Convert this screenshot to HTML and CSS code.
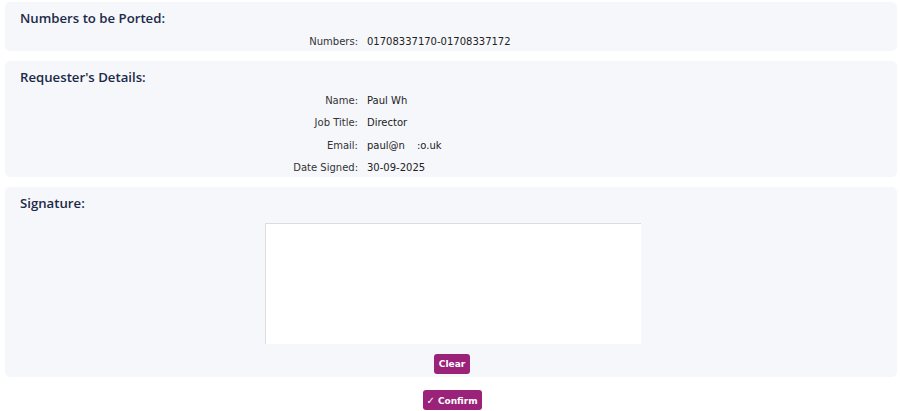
FILE: index.html
```html
<!DOCTYPE html>
<html>
<head>
<meta charset="utf-8">
<link rel="stylesheet" href="styles.css">
</head>
<body>
<div class="page">
  <section class="panel panel-numbers">
    <h2 class="panel-title">Numbers to be Ported:</h2>
    <div class="fields">
      <div class="label">Numbers:</div><div class="value">01708337170-01708337172</div>
    </div>
  </section>
  <section class="panel panel-details">
    <h2 class="panel-title">Requester's Details:</h2>
    <div class="fields">
      <div class="label">Name:</div><div class="value">Paul Wh</div>
      <div class="label">Job Title:</div><div class="value">Director</div>
      <div class="label">Email:</div><div class="value">paul@n<span class="redact"></span>:o.uk</div>
      <div class="label">Date Signed:</div><div class="value">30-09-2025</div>
    </div>
  </section>
  <section class="panel panel-signature">
    <h2 class="panel-title">Signature:</h2>
    <div class="sig-wrap"><div class="sig-pad"></div></div>
    <div class="btn-row"><button class="btn">Clear</button></div>
  </section>
  <div class="confirm-row"><button class="btn btn-confirm"><span class="tick">&#10003;</span> Confirm</button></div>
</div>
</body>
</html>
```
FILE: styles.css
```css
html, body {
  margin: 0;
  padding: 0;
  background: #ffffff;
}
.page {
  padding: 2px 3px 0 5px;
  display: flex;
  flex-direction: column;
  gap: 10px;
}
.panel {
  background: #f6f7fb;
  border-radius: 5px;
  padding: 7px 15px 0 15px;
}
.panel-numbers { height: 42px; }
.panel-details { height: 109px; }
.panel-signature { height: 183px; }
.panel-title {
  margin: 0;
  font-family: "Open Sans", "Noto Sans", sans-serif;
  font-weight: 600;
  font-size: 13.2px;
  line-height: 18px;
  color: #1b2a48;
}
.fields {
  display: grid;
  grid-template-columns: 338px 1fr;
  column-gap: 9px;
  font-family: "DejaVu Sans", Verdana, sans-serif;
  font-size: 10px;
  color: #222;
  margin-top: 8px;
}
.panel-details .fields { margin-top: 4px; }
.label {
  text-align: right;
  color: #333;
  line-height: 22.3px;
  height: 22.3px;
}
.value {
  line-height: 22.3px;
  height: 22.3px;
  white-space: nowrap;
}
.panel-numbers .label, .panel-numbers .value { line-height: 14px; height: 14px; }
.redact {
  display: inline-block;
  width: 12px;
}
.sig-wrap {
  display: flex;
  justify-content: center;
  margin-top: 11px;
}
.sig-pad {
  width: 375px;
  height: 120px;
  background: #ffffff;
  border-top: 1px solid #dcdce0;
  border-left: 1px solid #dcdce0;
  margin-left: 4px;
}
.btn-row, .confirm-row {
  display: flex;
  justify-content: center;
}
.btn-row { margin-top: 10px; }
.btn {
  font-family: "DejaVu Sans", Verdana, sans-serif;
  font-weight: bold;
  font-size: 9px;
  color: #ffffff;
  background: #9a2379;
  border: none;
  border-radius: 3px;
  height: 20px;
  padding: 0 5px;
  margin: 0 0 0 2px;
}
.tick { font-size: 10px; font-weight: bold; }
.btn-confirm { margin-top: 3px; margin-left: 3px; padding: 0 4px 0 3px; }
```
